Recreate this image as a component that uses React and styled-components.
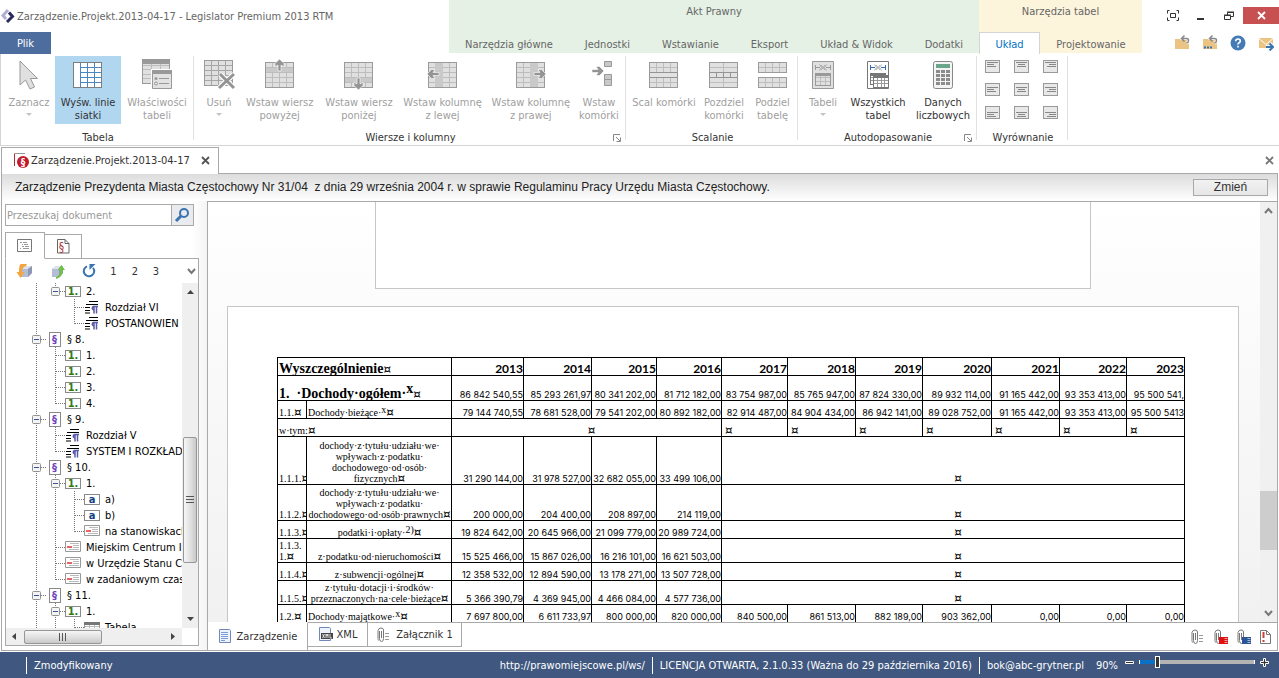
import React, { useState } from "react";
import styled, { createGlobalStyle, css } from "styled-components";

const GlobalStyle = createGlobalStyle`
  * {
    box-sizing: border-box;
  }
  body {
    margin: 0;
    background: #fff;
    color: #333;
    font-family: "DejaVu Sans Condensed", "DejaVu Sans", Tahoma, sans-serif;
    font-size: 11px;
    line-height: 13px;
  }
  button, input {
    font: inherit;
    color: inherit;
    margin: 0;
    padding: 0;
    border: 0;
    background: none;
  }
  svg {
    display: block;
    flex: none;
  }
`;

const Window = styled.div`
  display: flex;
  flex-direction: column;
  height: 100vh;
  min-width: 1100px;
  overflow: hidden;
`;

/* title bar and ribbon tabs */

const Header = styled.header`
  display: flex;
  height: 54px;
  flex: none;
`;

const TitleArea = styled.div`
  width: 449px;
  display: flex;
  flex-direction: column;
  justify-content: space-between;
`;

const Title = styled.h1`
  display: flex;
  align-items: center;
  gap: 2px;
  height: 32px;
  margin: 0;
  font-size: 11px;
  font-weight: 400;
  color: #666;
  white-space: nowrap;
`;

const FileTab = styled.button`
  width: 51px;
  height: 22px;
  background: #4e6d9f;
  color: #fff;
`;

const TabGroup = styled.div`
  width: ${props => props.width}px;
  height: 53px;
  display: flex;
  flex-direction: column;
  justify-content: space-between;
  background: ${props => props.bg};
  color: #666;
  text-align: center;
`;

const TabGroupTitle = styled.div`
  padding-top: 5px;
`;

const TabRow = styled.nav`
  display: flex;
  height: 21px;
`;

const RibbonTab = styled.button`
  flex: 1 1 auto;
  height: 22px;
  padding-top: 2px;
  white-space: nowrap;
  ${props =>
    props.active &&
    css`
      flex: 0 0 61px;
      background: #fff;
      border: 1px solid #d4d4d4;
      border-bottom: 0;
      color: #0072c6;
    `}
`;

const WindowArea = styled.div`
  flex: 1;
  display: flex;
  flex-direction: column;
  align-items: flex-end;
`;

const WindowButtons = styled.div`
  display: flex;
  align-items: center;
  height: 17px;
  margin-top: 7px;
`;

const WindowButton = styled.button`
  width: ${props => (props.close ? 36 : 28)}px;
  height: 17px;
  display: flex;
  align-items: center;
  justify-content: center;
  background: ${props => (props.close ? "#c75050" : "transparent")};
`;

const QuickButtons = styled.div`
  display: flex;
  gap: 12px;
  margin: 11px 5px 0 0;
`;

const IconButton = styled.button`
  display: flex;
  align-items: center;
  justify-content: center;
`;

/* ribbon */

const Ribbon = styled.div`
  display: flex;
  flex: none;
  height: 92px;
  border-left: 1px solid #d4d4d4;
  border-bottom: 1px solid #d4d4d4;
  padding-top: 2px;
`;

const Group = styled.section`
  position: relative;
  width: ${props => props.width}px;
  display: flex;
  flex-direction: column;
  padding: 0 2px 0 4px;
  border-right: 1px solid #e1e1e1;
  height: 84px;
`;

const GroupButtons = styled.div`
  display: flex;
  flex: none;
  justify-content: space-between;
  height: 68px;
`;

const GroupLabel = styled.h2`
  margin: 7px 0 0;
  font-size: 11px;
  font-weight: 400;
  line-height: 13px;
  text-align: center;
  color: #333;
`;

const Launcher = styled.button`
  position: absolute;
  right: 4px;
  bottom: -2px;
`;

const Tool = styled.button`
  width: ${props => props.width}px;
  height: 68px;
  padding-top: 3px;
  display: flex;
  flex-direction: column;
  align-items: center;
  gap: 5px;
  white-space: nowrap;
  color: ${props => (props.disabled ? "#a0a0a0" : "#333")};
  background: ${props => (props.pressed ? "#b1d6f0" : "transparent")};
`;

const ToolLabel = styled.span`
  display: flex;
  flex-direction: column;
  align-items: center;
  line-height: 13px;
`;

const Caret = styled.span`
  margin-top: 4px;
  border: 3px solid transparent;
  border-top-color: #c4c4c4;
  border-bottom: 0;
`;

const AlignGrid = styled.div`
  display: grid;
  flex: none;
  grid-template-columns: repeat(3, 15px);
  grid-auto-rows: 13px;
  gap: 10px 14px;
  padding: 4px 0 0 4px;
  height: 68px;
`;

/* document frame */

const DocTabs = styled.div`
  display: flex;
  flex: none;
  height: 27px;
  margin: 1px 1px 0;
`;

const DocTab = styled.div`
  width: 218px;
  display: flex;
  align-items: center;
  padding: 0 8px 2px 12px;
  border: 1px solid #a9a9a9;
  border-bottom: 0;
  white-space: nowrap;

  span {
    flex: 1;
  }
`;

const DocTabsRest = styled.div`
  flex: 1;
  display: flex;
  align-items: center;
  justify-content: flex-end;
  padding-right: 4px;
  border-bottom: 1px solid #a9a9a9;
`;

const Frame = styled.main`
  flex: 1;
  min-height: 0;
  display: flex;
  flex-direction: column;
  margin: 0 1px 1px;
  border: 1px solid #a9a9a9;
  border-top: 0;
`;

const InfoBar = styled.div`
  display: flex;
  flex: none;
  align-items: center;
  justify-content: space-between;
  height: 27px;
  padding: 0 9px 0 13px;
  background: linear-gradient(#dcdcdc, #fff);
  font-family: "Liberation Sans", Arial, sans-serif;
  font-size: 12px;
  color: #222;
  white-space: pre;
`;

const ChangeButton = styled.button`
  width: 75px;
  height: 17px;
  background: linear-gradient(#f2f2f2, #e6e6e6);
  border: 1px solid #a9a9a9;
  color: #333;
`;

const Body = styled.div`
  flex: 1;
  min-height: 0;
  display: flex;
`;

/* side pane */

const Side = styled.aside`
  width: 205px;
  flex: none;
  display: flex;
  flex-direction: column;
  padding: 3px 8px 4px 3px;
  background: linear-gradient(to right, #fff 190px, #f4f4f4);
`;

const Search = styled.label`
  display: flex;
  width: 189px;
  height: 22px;
  flex: none;
  border: 1px solid #a9a9a9;
  background: #fff;

  input {
    flex: 1;
    min-width: 0;
    padding: 0 1px;
    outline: 0;
  }
  input::placeholder {
    color: #999;
    opacity: 1;
  }
  button {
    width: 22px;
    border-left: 1px solid #a9a9a9;
    background: #e9ebee;
  }
`;

const SideTabs = styled.div`
  display: flex;
  align-items: flex-end;
  flex: none;
  height: 27px;
  margin-top: 6px;
`;

const SideTab = styled.button`
  width: ${props => (props.active ? 40 : 37)}px;
  height: ${props => (props.active ? 27 : 25)}px;
  display: flex;
  align-items: center;
  justify-content: center;
  border: 1px solid #a9a9a9;
  border-left-width: ${props => (props.active ? 1 : 0)}px;
  border-bottom-color: ${props => (props.active ? "#fff" : "#a9a9a9")};
`;

const SideTabsRest = styled.div`
  flex: 1;
  height: 1px;
  background: #a9a9a9;
`;

const Panel = styled.div`
  flex: 1;
  min-height: 0;
  display: flex;
  flex-direction: column;
  border: 1px solid #a9a9a9;
  border-top: 0;
  background: #fff;
`;

const PanelTools = styled.div`
  display: flex;
  flex: none;
  align-items: center;
  height: 24px;
  padding: 0 0 0 10px;
`;

const PanelTool = styled.button`
  display: flex;
  justify-content: center;
  width: ${props => props.width}px;

  &:last-child {
    margin-left: auto;
  }
`;

const TreeArea = styled.div`
  flex: 1;
  min-height: 0;
  display: flex;
`;

const Tree = styled.ul`
  flex: 1;
  min-width: 0;
  overflow: hidden;
  list-style: none;
  margin: 0;
  padding: 0 0 0 21px;
  color: #000;
`;

const TreeRow = styled.li`
  display: flex;
  align-items: center;
  height: 16px;
  white-space: nowrap;
`;

const TreeIcon = styled.span`
  width: 21px;
  flex: none;
  display: flex;
  justify-content: ${props => (props.wide ? "flex-start" : "center")};
  padding-right: ${props => (props.wide ? 0 : 4)}px;
`;

const Badge = styled.span`
  display: flex;
  align-items: center;
  justify-content: center;
  width: ${props => (props.narrow ? 12 : 16)}px;
  height: ${props => (props.narrow ? 15 : 11)}px;
  border: 1px solid #8a8a8a;
  background: #fff;
  color: ${props => props.tint};
  font-weight: 700;
  line-height: 9px;
`;

const VScroll = styled.div`
  width: 16px;
  flex: none;
  display: flex;
  flex-direction: column;
  align-items: center;
  justify-content: space-between;
  padding: 6px 0;
  background: #efefef;
`;

const VThumb = styled.div`
  width: 14px;
  height: 126px;
  margin-top: 88px;
  display: flex;
  align-items: center;
  justify-content: center;
  border: 1px solid #979797;
  border-radius: 2px;
  background: linear-gradient(to right, #f6f6f6, #ddd 60%, #c8c8c8);
`;

const HScroll = styled.div`
  display: flex;
  flex: none;
  align-items: center;
  height: 17px;
  width: 176px;
  padding: 0 6px 0 5px;
  background: #efefef;
`;

const HThumb = styled.div`
  width: 78px;
  height: 14px;
  margin: 0 auto 0 6px;
  display: flex;
  align-items: center;
  justify-content: center;
  border: 1px solid #979797;
  border-radius: 2px;
  background: linear-gradient(#f6f6f6, #ddd 60%, #c8c8c8);
`;

/* document */

const DocPane = styled.div`
  flex: 1;
  min-width: 0;
  display: flex;
  flex-direction: column;
  border-left: 1px solid #a9a9a9;
  border-top: 1px solid #a9a9a9;
`;

const DocView = styled.div`
  flex: 1;
  min-height: 0;
  display: flex;
`;

const Canvas = styled.div`
  flex: 1;
  min-width: 0;
  overflow: hidden;
  display: flex;
  flex-direction: column;
  align-items: center;
  gap: 17px;
  padding-right: 2px;
  background: linear-gradient(#fff, #f1f1f1);
`;

const Page = styled.div`
  flex: none;
  width: ${props => props.width}px;
  background: #fff;
  border: 1px solid #c6c6c6;
`;

const PageEnd = styled(Page)`
  height: 87px;
  border-top: 0;
`;

const PageStart = styled(Page)`
  padding: 50px 53px 50px 49px;
  border-bottom: 0;
`;

const DocScroll = styled.div`
  width: 17px;
  flex: none;
  display: flex;
  flex-direction: column;
  align-items: center;
  padding: 5px 0;
  background: #f0f0f0;
`;

const DocThumb = styled.div`
  width: 17px;
  height: 59px;
  margin: auto 0 60px;
  background: #cdcdcd;
`;

const Sheet = styled.table`
  width: 100%;
  table-layout: fixed;
  border-collapse: collapse;
  color: #000;
  font-family: "Liberation Serif", "Times New Roman", serif;
  font-size: 10px;
  line-height: 11px;

  td, th {
    height: inherit;
    padding: 0;
    border: 1px solid #000;
    vertical-align: bottom;
    text-align: left;
    white-space: nowrap;
    overflow: hidden;
  }
`;

const Row = styled.tr`
  height: ${props => props.height}px;
`;

const YearCell = styled.th`
  && {
    text-align: right;
    font-family: Lato, sans-serif;
    font-size: 12px;
    line-height: 13px;
  }
`;

const NumCell = styled.td`
  && {
    text-align: right;
    font-family: Inter, sans-serif;
    font-size: 9px;
  }
`;

const LabelCell = styled.td`
  && {
    padding-left: 1px;
    text-align: ${props => (props.center ? "center" : "left")};
    font-size: ${props => (props.big ? 14 : 10)}px;
    line-height: ${props => (props.big ? 13 : 11)}px;
    font-weight: ${props => (props.big ? 700 : 400)};
  }
`;

const MarkCell = styled.td`
  && {
    padding-left: ${props => (props.center ? 10 : 3)}px;
    text-align: ${props => (props.center ? "center" : "left")};
  }
`;

const Mark = styled.span`
  font-family: "DejaVu Sans", sans-serif;
  font-size: 12px;
  font-weight: 400;
  line-height: 8px;
`;

const Sup = styled.span`
  font-size: ${props => (props.big ? 14 : 10)}px;
  line-height: 8px;
  position: relative;
  top: ${props => (props.big ? -5 : -3)}px;
`;

const Footer = styled.div`
  display: flex;
  flex: none;
  height: 28px;
`;

const FooterTab = styled.button`
  height: ${props => (props.active ? 28 : 25)}px;
  width: ${props => props.width}px;
  display: flex;
  align-items: center;
  justify-content: center;
  gap: 4px;
  border: 1px solid #a9a9a9;
  border-left: 0;
  border-top-color: ${props => (props.active ? "transparent" : "#a9a9a9")};
  border-bottom-width: ${props => (props.active ? 0 : 1)}px;
`;

const FooterRest = styled.div`
  flex: 1;
  display: flex;
  align-items: center;
  justify-content: flex-end;
  gap: 7px;
  padding-right: 5px;
  border-top: 1px solid #a9a9a9;
`;

/* status bar */

const Status = styled.footer`
  display: flex;
  flex: none;
  align-items: center;
  height: 26px;
  padding: 0 10px 0 26px;
  background: #40587f;
  color: #fff;
  white-space: nowrap;
`;

const StatusItem = styled.span`
  height: 17px;
  line-height: 17px;
  padding: 0 7px;
  border-left: 1px solid #fff;

  a {
    color: inherit;
    text-decoration: none;
  }
`;

const StatusLink = styled.a`
  margin-left: auto;
  padding-right: 7px;
  color: inherit;
  text-decoration: none;
`;

const Zoom = styled.div`
  display: flex;
  align-items: center;
  gap: 5px;
  padding-left: 5px;

  output {
    margin-right: 2px;
  }
  svg {
    margin-top: -6px;
  }
`;

const ZoomSlider = styled.input`
  appearance: none;
  width: 116px;
  height: 12px;
  margin-top: -6px;
  background: linear-gradient(
    to right,
    #fff 1px,
    #0a72c4 1px 18px,
    #b4b4b4 18px 115px,
    #fff 115px
  ) center / 100% 4px no-repeat;

  &::-webkit-slider-thumb {
    appearance: none;
    width: 5px;
    height: 12px;
    background: #333;
    border: 1px solid #fff;
  }
`;

/* icons */

const Grid = ({ x, y, w, h, cols, rows, fill = "#e0e0e0", line = "#bdbdbd", edge = "#9b9b9b" }) => (
  <g strokeWidth="1">
    <rect x={x + 0.5} y={y + 0.5} width={w - 1} height={h - 1} fill={fill} />
    {Array.from({ length: cols - 1 }, (_, i) => {
      const px = x + Math.round(((w - 1) * (i + 1)) / cols) + 0.5;
      return <path key={i} d={`M${px} ${y + 1}v${h - 2}`} stroke={line} />;
    })}
    {Array.from({ length: rows - 1 }, (_, i) => {
      const py = y + Math.round(((h - 1) * (i + 1)) / rows) + 0.5;
      return <path key={i} d={`M${x + 1} ${py}h${w - 2}`} stroke={line} />;
    })}
    <rect x={x + 0.5} y={y + 0.5} width={w - 1} height={h - 1} fill="none" stroke={edge} />
  </g>
);

const Arrow = ({ x, y, turn }) => (
  <path
    transform={`translate(${x} ${y}) rotate(${turn})`}
    d="M-6 -1.5H0L-2 -4.5H1.5L6 0L1.5 4.5H-2L0 1.5H-6Z"
    fill="#949494"
    stroke="#fff"
    strokeWidth="0.6"
  />
);

const Icon32 = ({ children }) => (
  <svg width="32" height="32" viewBox="0 0 32 32" fill="none" aria-hidden="true">
    {children}
  </svg>
);

const fitArrows = color => (
  <>
    <path d="M8.500 6v5M8 8.500h5M23.500 6v5M24 8.500h-5" stroke={color} />
    <path d="M12.500 5.500l2 3-2 3M19.500 5.500l-2 3 2 3M14 6l4 5M18 6l-4 5" stroke="#999" strokeWidth="0.800" />
  </>
);

const icons = {
  cursor: (
    <Icon32>
      <path d="M7 2V26L12.500 21L17 30L21.500 28L17.500 19.500H24.500Z" fill="#e0e0e0" stroke="#999" />
    </Icon32>
  ),
  gridLines: (
    <Icon32>
      <Grid x={1} y={3} w={29} h={26} cols={4} rows={5} fill="#fff" line="#4a86c0" edge="#7d7d7d" />
      <path d="M2 4h6v24H2z" fill="#fff" />
      <path d="M8.500 4v24M8 8.500h21" stroke="#4a86c0" />
    </Icon32>
  ),
  properties: (
    <Icon32>
      <Grid x={1} y={1} w={28} h={24} cols={3} rows={5} />
      <path d="M1 0h28v5H1z" fill="#999" />
      <path d="M10 10h22v21H10z" fill="#fff" />
      <path d="M11.500 11.500h19v18h-19z" fill="#e2e2e2" stroke="#999" />
      <path d="M11 11h20v4H11z" fill="#999" />
      <circle cx="15" cy="19.500" r="1.500" fill="#999" />
      <circle cx="15" cy="24.500" r="1.500" fill="#e2e2e2" stroke="#999" />
      <path d="M18 19.500h10M18 24.500h10" stroke="#999" />
    </Icon32>
  ),
  remove: (
    <Icon32>
      <Grid x={1} y={1} w={29} h={26} cols={4} rows={5} line="#a6a6a6" />
      <path d="M17 15l14 14M31 15L16 29" stroke="#fff" strokeWidth="5" />
      <path d="M17 15l14 14M31 15L16 29" stroke="#949494" strokeWidth="3" />
    </Icon32>
  ),
  rowAbove: (
    <Icon32>
      <Grid x={1} y={3} w={29} h={26} cols={4} rows={5} />
      <path d="M2 9h27v4H2z" fill="#c9c9c9" />
      <Arrow x={15.5} y={6} turn={-90} />
    </Icon32>
  ),
  rowBelow: (
    <Icon32>
      <Grid x={1} y={3} w={29} h={26} cols={4} rows={5} />
      <path d="M2 19h27v4H2z" fill="#c9c9c9" />
      <Arrow x={15.5} y={25} turn={90} />
    </Icon32>
  ),
  colLeft: (
    <Icon32>
      <Grid x={1} y={3} w={29} h={26} cols={4} rows={5} />
      <path d="M8 4h8v24H8z" fill="#c9c9c9" />
      <Arrow x={6} y={15} turn={180} />
    </Icon32>
  ),
  colRight: (
    <Icon32>
      <Grid x={1} y={3} w={29} h={26} cols={4} rows={5} />
      <path d="M15 4h8v24h-8z" fill="#c9c9c9" />
      <Arrow x={25} y={15} turn={0} />
    </Icon32>
  ),
  cells: (
    <Icon32>
      <Arrow x={15} y={12} turn={0} />
      <path d="M21.500 2.500h7v5h-7zM21.500 15.500h7v5h-7zM21.500 20.500h7v6h-7z" fill="#c9c9c9" stroke="#999" />
    </Icon32>
  ),
  merge: (
    <Icon32>
      <Grid x={1} y={3} w={29} h={26} cols={4} rows={5} />
      <path d="M1.500 13.500h28v5h-28z" fill="#e2e2e2" stroke="#949494" />
    </Icon32>
  ),
  splitCells: (
    <Icon32>
      <Grid x={1} y={3} w={29} h={26} cols={2} rows={5} />
      <path d="M1.500 13.500h28v5h-28z" fill="#e2e2e2" stroke="#949494" />
      <path d="M8.500 14v4M15.500 14v4M22.500 14v4" stroke="#949494" />
    </Icon32>
  ),
  splitTable: (
    <Icon32>
      <Grid x={1} y={3} w={29} h={11} cols={4} rows={2} />
      <Grid x={1} y={18} w={29} h={11} cols={4} rows={2} />
    </Icon32>
  ),
  fitTable: (
    <Icon32>
      <path d="M5.500 2.500h21v27h-21z" fill="#e0e0e0" stroke="#999" />
      {fitArrows("#999")}
      <Grid x={8} y={14} w={16} h={13} cols={3} rows={3} edge="#999" />
      <path d="M8 14h16v3H8z" fill="#999" />
    </Icon32>
  ),
  fitAll: (
    <Icon32>
      <path d="M5.500 2.500h21v27h-21z" fill="#fff" stroke="#777" />
      {fitArrows("#2f6fae")}
      <Grid x={8} y={14} w={16} h={12} cols={3} rows={3} fill="#fff" edge="#777" line="#999" />
      <path d="M8 14h16v3H8z" fill="#777" />
      <Grid x={11} y={17} w={16} h={12} cols={4} rows={3} fill="#fff" edge="#777" line="#999" />
      <path d="M11 16h16v3H11z" fill="#777" />
    </Icon32>
  ),
  numbers: (
    <Icon32>
      <rect x="6.500" y="2.500" width="19" height="27" rx="2" fill="#f4f4f4" stroke="#888" />
      <path d="M9 5h14v4H9z" fill="#6ba58a" />
      {[11, 15, 19, 23].map(y => (
        <path key={y} d={`M9 ${y}h4v3h-4zM14 ${y}h4v3h-4zM19 ${y}h4v3h-4z`} fill="#8c8c8c" />
      ))}
    </Icon32>
  )
};

const AlignIcon = ({ row, col }) => {
  const lines = [11, 7, 9];
  return (
    <svg width="15" height="13" fill="none">
      <rect x="0.500" y="0.500" width="14" height="12" fill="#e8e8e8" stroke="#999" />
      {lines.map((len, i) => {
        const x = col === 0 ? 2 : col === 1 ? (15 - len) / 2 : 13 - len;
        return <path key={i} d={`M${x} ${row * 2 + 2.5 + i * 2}h${len}`} stroke="#888" />;
      })}
    </svg>
  );
};

const LogoIcon = () => (
  <svg width="15" height="16" fill="none" strokeWidth="3">
    <path d="M8 2L3 7.500L6 11" stroke="#b3aed0" />
    <path d="M9 4.500L12.500 8.500L7 14" stroke="#2b2a5c" />
  </svg>
);

const XIcon = ({ color = "#555", size = 9 }) => (
  <svg width={size} height={size} viewBox="0 0 9 9">
    <path d="M1 1l7 7M8 1L1 8" stroke={color} strokeWidth="1.800" />
  </svg>
);

const FullIcon = () => (
  <svg width="14" height="12" fill="none" stroke="#333">
    <path d="M3.500 0.500h-2v3M10.500 0.500h2v3M3.500 10.500h-2v-3M10.500 10.500h2v-3M4.500 3.500h5v4h-5z" />
  </svg>
);

const MinIcon = () => (
  <svg width="8" height="10">
    <path d="M0 7h7v2H0z" fill="#333" />
  </svg>
);

const RestoreIcon = () => (
  <svg width="11" height="10" fill="none" stroke="#333">
    <path d="M3.500 4V1.500h6v4H7M3 1h7M0.500 4.500h6v4h-6zM0 4h7" />
  </svg>
);

const FolderIcon = ({ dots }) => (
  <svg width="16" height="16" fill="none">
    <path d="M1 4h5l1 1h8v9H1z" fill="#ebc383" />
    <path d="M8 3.500h4.500q2 0 2 2t-2 2.500" stroke="#fff" strokeWidth="3" />
    <path d="M8 3.500h4.500q2 0 2 2t-2 2.500M10.500 0.500l-3 3 3 3" stroke="#888" strokeWidth="1.500" />
    {dots && <path d="M2 12.500h2M5 12.500h2M8 12.500h2" stroke="#3a74b0" strokeWidth="2" />}
  </svg>
);

const HelpIcon = () => (
  <svg width="16" height="16">
    <circle cx="8" cy="8" r="7.500" fill="#447bb5" />
    <path d="M5.700 6.200q0-2.200 2.300-2.200t2.300 2q0 1.200-1.200 1.800T8 9.500M8 10.800v1.700" fill="none" stroke="#fff" strokeWidth="1.600" />
  </svg>
);

const MailIcon = () => (
  <svg width="16" height="16" fill="none">
    <path d="M1 3h14v10H1z" fill="#ebc383" />
    <path d="M1 3.500l7 6 7-6" stroke="#fff" />
    <path d="M8 12h6M11.500 8.500l3.500 3.500-3.500 3.500" stroke="#fff" strokeWidth="4" />
    <path d="M8 12h6M11.500 8.500l3.500 3.500-3.500 3.500" stroke="#3a74b0" strokeWidth="2" />
  </svg>
);

const LauncherIcon = () => (
  <svg width="8" height="8" fill="none" stroke="#888">
    <path d="M0.500 7V0.500H7M3 3l4 4M7.500 3.500v4h-4" />
  </svg>
);

const ParagraphIcon = () => (
  <svg width="17" height="16" fill="none">
    <path d="M0.500 14V1.500" stroke="#a33" />
    <path d="M1 1.500H11" stroke="#999" />
    <circle cx="9" cy="10" r="6" fill="#c01a2b" />
    <text x="9" y="13.500" fontSize="10" fontWeight="700" fill="#fff" textAnchor="middle">§</text>
  </svg>
);

const SearchIcon = () => (
  <svg width="20" height="18" fill="none" stroke="#3a74b0">
    <circle cx="12" cy="7" r="4" strokeWidth="2" />
    <path d="M9 10l-5 5" strokeWidth="3" />
  </svg>
);

const OutlineIcon = () => (
  <svg width="16" height="14" fill="none">
    <path d="M0.500 0.500h14v12h-14z" stroke="#777" />
    <path d="M3 3.500h2M6 3.500h4M5 5.500h1M7 5.500h4M5 7.500h2M8 7.500h4M3 9.500h1M6 9.500h6" stroke="#999" />
  </svg>
);

const StatuteIcon = () => (
  <svg width="13" height="15" fill="none">
    <path d="M0.500 0.500h7.500l4 4v9.500h-11.500z" stroke="#666" />
    <path d="M8 0.500v4h4" stroke="#666" />
    <text x="4.500" y="11.500" fontSize="12" fill="#b04040" textAnchor="middle">§</text>
  </svg>
);

const BoxIcon = ({ up }) => (
  <svg width="18" height="16" fill="none">
    <path d="M5 6l4-3h7v7l-4 4H5z" fill="#b4bdd4" />
    <path d="M5 6l4-3h7l-4 3z" fill="#dde2ee" />
    <path d="M12 6l4-3v7l-4 4z" fill="#8d97b6" />
    {up ? (
      <path d="M9 14q4-1 4-7h-2.500l4-5 3.500 5h-2q0 7-7 9z" fill="#6fbf4b" />
    ) : (
      <path d="M11 1H5Q3 1 3 9H0.500l4 6 4-6H6Q6 4 10 3z" fill="#f3a640" />
    )}
  </svg>
);

const RefreshIcon = () => (
  <svg width="14" height="14" fill="none">
    <path d="M5 2.300a5.200 5.200 0 1 0 6 1.500" stroke="#3a74b0" strokeWidth="2" />
    <path d="M7.500 0h6l-6 6z" fill="#3a74b0" />
  </svg>
);

const Chevron = ({ up }) => (
  <svg width="9" height="7" fill="none">
    <path d={up ? "M1 6l3.500-4L8 6" : "M1 1l3.500 4L8 1"} stroke="#777" strokeWidth="2" />
  </svg>
);

const Triangle = ({ d }) => (
  <svg width="7" height="7">
    <path d={d} fill="#444" />
  </svg>
);

const Grip = ({ side }) => (
  <svg width="8" height="8">
    <path d={side ? "M0.500 0v8M3.500 0v8M6.500 0v8" : "M0 0.500h8M0 3.500h8M0 6.500h8"} stroke="#555" />
  </svg>
);

const ChapterIcon = () => (
  <svg width="16" height="14" fill="none">
    <path d="M5 1.500h9M2 4.500h12M1 7.500h5M1 10.500h5M1 13h5" stroke="#000" />
    <path d="M14 6.500H9.500q-2.500 1.500 0 3.500M10 6.500v7M12.500 6.500v7" stroke="#5a5aa8" strokeWidth="1.500" />
  </svg>
);

const TextIcon = () => (
  <svg width="16" height="12" fill="none">
    <path d="M0.500 0.500h15v10h-15z" fill="#fff" stroke="#999" />
    <path d="M5 2.500h9M8 4.500h6M8 6.500h6M4 8.500h10" stroke="#bbb" />
    <path d="M2 6h5" stroke="#e03030" strokeWidth="1.500" />
  </svg>
);

const SmallTableIcon = () => (
  <svg width="16" height="13">
    <Grid x={0} y={1} w={16} h={12} cols={3} rows={3} fill="#fff" />
    <path d="M0 1h16v3H0z" fill="#777" />
  </svg>
);

const GuideIcon = ({ kind }) => {
  const open = kind === "t" || kind === "l";
  const down = kind === "|" || kind === "T" || kind === "t";
  return (
    <svg width="19" height="16" fill="none">
      {kind !== " " && <path d={down ? "M9.500 0v16" : "M9.500 0v9"} stroke="#777" strokeDasharray="1 1" />}
      {kind !== " " && kind !== "|" && <path d="M10 8.500h9" stroke="#777" strokeDasharray="1 1" />}
      {open && <rect x="5.500" y="4.500" width="8" height="8" rx="1" fill="#f4f4f4" stroke="#919191" />}
      {open && <path d="M7 8.500h5" stroke="#3b4f9a" />}
    </svg>
  );
};

const DocIcon = ({ xml }) => (
  <svg width="15" height="15" fill="none">
    <path d="M1.500 0.500h10l1 1v12h-11z" fill="#eef2fb" stroke="#7188bb" />
    {xml ? (
      <>
        <path d="M3 6h12v6H3z" fill="#444" />
        <path d="M4.500 7l2 4M6.500 7l-2 4M8 11v-4l1 2 1-2v4M12 7v4h2" stroke="#fff" strokeWidth="0.800" />
      </>
    ) : (
      <path d="M3 3.500h7M3 5.500h7M3 7.500h7M3 9.500h7M3 11.500h4" stroke="#7b9bd8" />
    )}
  </svg>
);

const ClipIcon = ({ tint }) => (
  <svg width="16" height="16" fill="none">
    <path d="M3.500 4v7.500q0 3 2 3t2-3V3q0-2-2.500-2T2 3.500v8q0 1 .500 2M5.500 4v7" stroke="#777" />
    {tint ? (
      <path d="M6 8h9v7H6z" fill={tint} />
    ) : (
      <path d="M9 6.500h4M9 9.500h4M9 12.500h4" stroke="#999" />
    )}
    {tint && <path d="M11.500 9.500h3M11.500 11.500h3M11.500 13.500h3" stroke="#fff" strokeWidth="0.600" />}
  </svg>
);

const AlertIcon = () => (
  <svg width="13" height="16" fill="none">
    <path d="M1.500 1.500h6l4 4v9h-10zM7.500 1.500v4h4" stroke="#777" />
    <path d="M4.500 3v6M4.500 11v2" stroke="#d04030" strokeWidth="2" />
  </svg>
);

/* data */

const mainTabs = ["Narzędzia główne", "Jednostki", "Wstawianie", "Eksport", "Układ & Widok", "Dodatki"];

const groups = [
  {
    name: "Tabela",
    width: 193,
    tools: [
      { icon: "cursor", label: ["Zaznacz"], width: 48, off: true, menu: true },
      { icon: "gridLines", label: ["Wyśw. linie", "siatki"], width: 66, toggle: true },
      { icon: "properties", label: ["Właściwości", "tabeli"], width: 68, off: true }
    ]
  },
  {
    name: "Wiersze i kolumny",
    width: 432,
    launcher: true,
    tools: [
      { icon: "remove", label: ["Usuń"], width: 42, off: true, menu: true },
      { icon: "rowAbove", label: ["Wstaw wiersz", "powyżej"], width: 79, off: true },
      { icon: "rowBelow", label: ["Wstaw wiersz", "poniżej"], width: 79, off: true },
      { icon: "colLeft", label: ["Wstaw kolumnę", "z lewej"], width: 88, off: true },
      { icon: "colRight", label: ["Wstaw kolumnę", "z prawej"], width: 88, off: true },
      { icon: "cells", label: ["Wstaw", "komórki"], width: 48, off: true }
    ]
  },
  {
    name: "Scalanie",
    width: 172,
    tools: [
      { icon: "merge", label: ["Scal komórki"], width: 68, off: true },
      { icon: "splitCells", label: ["Pozdziel", "komórki"], width: 50, off: true },
      { icon: "splitTable", label: ["Podziel", "tabelę"], width: 45, off: true }
    ]
  },
  {
    name: "Autodopasowanie",
    width: 179,
    launcher: true,
    tools: [
      { icon: "fitTable", label: ["Tabeli"], width: 42, off: true, menu: true },
      { icon: "fitAll", label: ["Wszystkich", "tabel"], width: 64 },
      { icon: "numbers", label: ["Danych", "liczbowych"], width: 62 }
    ]
  }
];

// guides: one char per level, lowercase has an expander
const tree = [
  ["|l", "num", "2."],
  ["| T", "chapter", "Rozdział VI"],
  ["| L", "chapter", "POSTANOWIEN"],
  ["t", "par", "§ 8."],
  ["|T", "num", "1."],
  ["|T", "num", "2."],
  ["|T", "num", "3."],
  ["|L", "num", "4."],
  ["t", "par", "§ 9."],
  ["|T", "chapter", "Rozdział V"],
  ["|L", "chapter", "SYSTEM I ROZKŁAD"],
  ["t", "par", "§ 10."],
  ["|t", "num", "1."],
  ["||T", "letter", "a)"],
  ["||T", "letter", "b)"],
  ["||L", "text", "na stanowiskach"],
  ["|T", "text", "Miejskim Centrum In"],
  ["|T", "text", "w Urzędzie Stanu Cy"],
  ["|L", "text", "w zadaniowym czasie"],
  ["t", "par", "§ 11."],
  ["|t", "num", "1."],
  ["||L", "table", "Tabela"]
];

const treeIcons = {
  num: <Badge tint="#2f7d1a">1.</Badge>,
  par: <Badge narrow tint="#6f42c1">§</Badge>,
  letter: <Badge tint="#0f3f7f">a</Badge>,
  chapter: <ChapterIcon />,
  text: <TextIcon />,
  table: <SmallTableIcon />
};

const columns = [29, 145, 72, 68, 65, 65, 66, 68, 67, 69, 68, 67, 58];
const years = [2013, 2014, 2015, 2016, 2017, 2018, 2019, 2020, 2021, 2022, 2023];

const total = [
  "86 842 540,55", "85 293 261,97", "80 341 202,00", "81 712 182,00", "83 754 987,00", "85 765 947,00",
  "87 824 330,00", "89 932 114,00", "91 165 442,00", "93 353 413,00", "95 500 541,"
];
const current = [
  "79 144 740,55", "78 681 528,00", "79 541 202,00", "80 892 182,00", "82 914 487,00", "84 904 434,00",
  "86 942 141,00", "89 028 752,00", "91 165 442,00", "93 353 413,00", "95 500 5413"
];
const capital = [
  "7 697 800,00", "6 611 733,97", "800 000,00", "820 000,00", "840 500,00", "861 513,00",
  "882 189,00", "903 362,00", "0,00", "0,00", "0,00"
];

const details = [
  {
    no: ["1.1.1."],
    height: 48,
    label: ["dochody·z·tytułu·udziału·we·", "wpływach·z·podatku·", "dochodowego·od·osób·", "fizycznych"],
    values: ["31 290 144,00", "31 978 527,00", "32 682 055,00", "33 499 106,00"]
  },
  {
    no: ["1.1.2."],
    height: 36,
    label: ["dochody·z·tytułu·udziału·we·", "wpływach·z·podatku·", "dochodowego·od·osób·prawnych"],
    values: ["200 000,00", "204 400,00", "208 897,00", "214 119,00"]
  },
  {
    no: ["1.1.3."],
    height: 18,
    label: ["podatki·i·opłaty·"],
    sup: "2)",
    values: ["19 824 642,00", "20 645 966,00", "21 099 779,00", "20 989 724,00"]
  },
  {
    no: ["1.1.3.", "1."],
    height: 24,
    label: ["z·podatku·od·nieruchomości"],
    values: ["15 525 466,00", "15 867 026,00", "16 216 101,00", "16 621 503,00"]
  },
  {
    no: ["1.1.4."],
    height: 18,
    label: ["z·subwencji·ogólnej"],
    values: ["12 358 532,00", "12 894 590,00", "13 178 271,00", "13 507 728,00"]
  },
  {
    no: ["1.1.5."],
    height: 24,
    label: ["z·tytułu·dotacji·i·środków·", "przeznaczonych·na·cele·bieżące"],
    values: ["5 366 390,79", "4 369 945,00", "4 466 084,00", "4 577 736,00"]
  }
];

const Lines = ({ items }) =>
  items.map((line, i) => (
    <React.Fragment key={i}>
      {i > 0 && <br />}
      {line}
    </React.Fragment>
  ));

const Numbers = ({ values }) => values.map((value, i) => <NumCell key={i}>{value}</NumCell>);

const BudgetTable = () => (
  <Sheet>
    <colgroup>
      {columns.map((width, i) => (
        <col key={i} width={width} />
      ))}
    </colgroup>
    <tbody>
      <Row height={18}>
        <LabelCell as="th" colSpan={2} big>
          Wyszczególnienie<Mark>¤</Mark>
        </LabelCell>
        {years.map(year => (
          <YearCell key={year}>{year}</YearCell>
        ))}
      </Row>
      <Row height={25}>
        <LabelCell colSpan={2} big>
          1. &nbsp;·Dochody·ogółem·<Sup big>x</Sup>
          <Mark>¤</Mark>
        </LabelCell>
        <Numbers values={total} />
      </Row>
      <Row height={18}>
        <LabelCell>
          1.1.<Mark>¤</Mark>
        </LabelCell>
        <LabelCell>
          Dochody·bieżące·<Sup>x</Sup>
          <Mark>¤</Mark>
        </LabelCell>
        <Numbers values={current} />
      </Row>
      <Row height={18}>
        <LabelCell colSpan={2}>
          w·tym:<Mark>¤</Mark>
        </LabelCell>
        <MarkCell colSpan={4} center>
          <Mark>¤</Mark>
        </MarkCell>
        {years.slice(4).map(year => (
          <MarkCell key={year}>
            <Mark>¤</Mark>
          </MarkCell>
        ))}
      </Row>
      {details.map((row, i) => (
        <Row key={i} height={row.height}>
          <LabelCell>
            <Lines items={row.no} />
            <Mark>¤</Mark>
          </LabelCell>
          <LabelCell center>
            <Lines items={row.label} />
            {row.sup && <Sup>{row.sup}</Sup>}
            <Mark>¤</Mark>
          </LabelCell>
          <Numbers values={row.values} />
          <MarkCell colSpan={7} center>
            <Mark>¤</Mark>
          </MarkCell>
        </Row>
      ))}
      <Row height={18}>
        <LabelCell>
          1.2.<Mark>¤</Mark>
        </LabelCell>
        <LabelCell>
          Dochody·majątkowe·<Sup>x</Sup>
          <Mark>¤</Mark>
        </LabelCell>
        <Numbers values={capital} />
      </Row>
    </tbody>
  </Sheet>
);

const App = () => {
  const [gridOn, setGridOn] = useState(true);
  const [query, setQuery] = useState("");
  const [zoom, setZoom] = useState(90);

  return (
    <Window>
      <GlobalStyle />
      <Header>
        <TitleArea>
          <Title>
            <LogoIcon />
            Zarządzenie.Projekt.2013-04-17 - Legislator Premium 2013 RTM
          </Title>
          <FileTab>Plik</FileTab>
        </TitleArea>
        <TabGroup width={530} bg="#e5f1e5">
          <TabGroupTitle>Akt Prawny</TabGroupTitle>
          <TabRow>
            {mainTabs.map(tab => (
              <RibbonTab key={tab}>{tab}</RibbonTab>
            ))}
          </TabRow>
        </TabGroup>
        <TabGroup width={163} bg="#fdf4dc">
          <TabGroupTitle>Narzędzia tabel</TabGroupTitle>
          <TabRow>
            <RibbonTab active>Układ</RibbonTab>
            <RibbonTab>Projektowanie</RibbonTab>
          </TabRow>
        </TabGroup>
        <WindowArea>
          <WindowButtons>
            <WindowButton aria-label="Pełny ekran"><FullIcon /></WindowButton>
            <WindowButton aria-label="Minimalizuj"><MinIcon /></WindowButton>
            <WindowButton aria-label="Przywróć"><RestoreIcon /></WindowButton>
            <WindowButton close aria-label="Zamknij"><XIcon color="#fff" /></WindowButton>
          </WindowButtons>
          <QuickButtons>
            <IconButton aria-label="Cofnij"><FolderIcon /></IconButton>
            <IconButton aria-label="Cofnij do"><FolderIcon dots /></IconButton>
            <IconButton aria-label="Pomoc"><HelpIcon /></IconButton>
            <IconButton aria-label="Wyślij"><MailIcon /></IconButton>
          </QuickButtons>
        </WindowArea>
      </Header>

      <Ribbon>
        {groups.map(group => (
          <Group key={group.name} width={group.width}>
            <GroupButtons>
              {group.tools.map(tool => (
                <Tool
                  key={tool.icon}
                  width={tool.width}
                  disabled={tool.off}
                  pressed={tool.toggle && gridOn ? 1 : undefined}
                  onClick={() => tool.toggle && setGridOn(!gridOn)}
                >
                  {icons[tool.icon]}
                  <ToolLabel>
                    {tool.label.map(line => (
                      <span key={line}>{line}</span>
                    ))}
                    {tool.menu && <Caret />}
                  </ToolLabel>
                </Tool>
              ))}
            </GroupButtons>
            <GroupLabel>{group.name}</GroupLabel>
            {group.launcher && (
              <Launcher aria-label={group.name}>
                <LauncherIcon />
              </Launcher>
            )}
          </Group>
        ))}
        <Group width={91}>
          <AlignGrid>
            {[0, 1, 2].map(row =>
              [0, 1, 2].map(col => (
                <IconButton key={`${row}${col}`} aria-label={`Wyrównanie ${row * 3 + col + 1}`}>
                  <AlignIcon row={row} col={col} />
                </IconButton>
              ))
            )}
          </AlignGrid>
          <GroupLabel>Wyrównanie</GroupLabel>
        </Group>
      </Ribbon>

      <DocTabs>
        <DocTab>
          <ParagraphIcon />
          <span>Zarządzenie.Projekt.2013-04-17</span>
          <IconButton aria-label="Zamknij kartę"><XIcon /></IconButton>
        </DocTab>
        <DocTabsRest>
          <IconButton aria-label="Zamknij dokument"><XIcon color="#777" /></IconButton>
        </DocTabsRest>
      </DocTabs>

      <Frame>
        <InfoBar>
          Zarządzenie Prezydenta Miasta Częstochowy Nr 31/04  z dnia 29 września 2004 r. w sprawie Regulaminu Pracy
          {" "}Urzędu Miasta Częstochowy.
          <ChangeButton>Zmień</ChangeButton>
        </InfoBar>
        <Body>
          <Side>
            <Search>
              <input
                aria-label="Przeszukaj dokument"
                placeholder="Przeszukaj dokument"
                value={query}
                onChange={e => setQuery(e.target.value)}
              />
              <button aria-label="Szukaj"><SearchIcon /></button>
            </Search>
            <SideTabs>
              <SideTab active aria-label="Struktura"><OutlineIcon /></SideTab>
              <SideTab aria-label="Akty"><StatuteIcon /></SideTab>
              <SideTabsRest />
            </SideTabs>
            <Panel>
              <PanelTools>
                <PanelTool width={18} aria-label="Pobierz"><BoxIcon /></PanelTool>
                <PanelTool width={44} aria-label="Wyślij"><BoxIcon up /></PanelTool>
                <PanelTool width={22} aria-label="Odśwież"><RefreshIcon /></PanelTool>
                <PanelTool width={27}>1</PanelTool>
                <PanelTool width={16}>2</PanelTool>
                <PanelTool width={26}>3</PanelTool>
                <PanelTool width={14} aria-label="Więcej"><Chevron /></PanelTool>
              </PanelTools>
              <TreeArea>
                <Tree>
                  {tree.map(([guides, icon, label], i) => (
                    <TreeRow key={i}>
                      {guides.split("").map((kind, k) => (
                        <GuideIcon key={k} kind={kind} />
                      ))}
                      <TreeIcon wide={icon !== "par" ? 1 : undefined}>{treeIcons[icon]}</TreeIcon>
                      {label}
                    </TreeRow>
                  ))}
                </Tree>
                <VScroll>
                  <Triangle d="M0 5l3.500-4L7 5z" />
                  <VThumb><Grip /></VThumb>
                  <Triangle d="M0 2l3.500 4L7 2z" />
                </VScroll>
              </TreeArea>
              <HScroll>
                <Triangle d="M5 0L1 3.500 5 7z" />
                <HThumb><Grip side /></HThumb>
                <Triangle d="M2 0l4 3.500L2 7z" />
              </HScroll>
            </Panel>
          </Side>

          <DocPane>
            <DocView>
              <Canvas>
                <PageEnd width={716} />
                <PageStart width={1012}>
                  <BudgetTable />
                </PageStart>
              </Canvas>
              <DocScroll>
                <Chevron up />
                <DocThumb />
                <Chevron />
              </DocScroll>
            </DocView>
            <Footer>
              <FooterTab active width={100}><DocIcon />Zarządzenie</FooterTab>
              <FooterTab width={60}><DocIcon xml />XML</FooterTab>
              <FooterTab width={94}><ClipIcon />Załącznik 1</FooterTab>
              <FooterRest>
                <IconButton aria-label="Załączniki"><ClipIcon /></IconButton>
                <IconButton aria-label="Załącznik PDF"><ClipIcon tint="#e01010" /></IconButton>
                <IconButton aria-label="Załącznik Word"><ClipIcon tint="#2a5699" /></IconButton>
                <IconButton aria-label="Błędy"><AlertIcon /></IconButton>
              </FooterRest>
            </Footer>
          </DocPane>
        </Body>
      </Frame>

      <Status>
        <StatusItem>Zmodyfikowany</StatusItem>
        <StatusLink href="http://prawomiejscowe.pl/ws/">http://prawomiejscowe.pl/ws/</StatusLink>
        <StatusItem>LICENCJA OTWARTA, 2.1.0.33 (Ważna do 29 października 2016)</StatusItem>
        <StatusItem>
          <a href="mailto:bok@abc-grytner.pl">bok@abc-grytner.pl</a>
        </StatusItem>
        <Zoom>
          <output>{zoom}%</output>
          <IconButton aria-label="Pomniejsz" onClick={() => setZoom(zoom - 10)}>
            <svg width="9" height="9"><path d="M0.500 3.500h8v2h-8z" fill="#333" stroke="#fff" /></svg>
          </IconButton>
          <ZoomSlider
            type="range"
            aria-label="Powiększenie"
            min="20"
            max="500"
            value={zoom}
            onChange={e => setZoom(Number(e.target.value))}
          />
          <IconButton aria-label="Powiększ" onClick={() => setZoom(zoom + 10)}>
            <svg width="9" height="9"><path d="M3.500 0.500h2v3h3v2h-3v3h-2v-3h-3v-2h3z" fill="#333" stroke="#fff" /></svg>
          </IconButton>
        </Zoom>
      </Status>
    </Window>
  );
};

export default App;
